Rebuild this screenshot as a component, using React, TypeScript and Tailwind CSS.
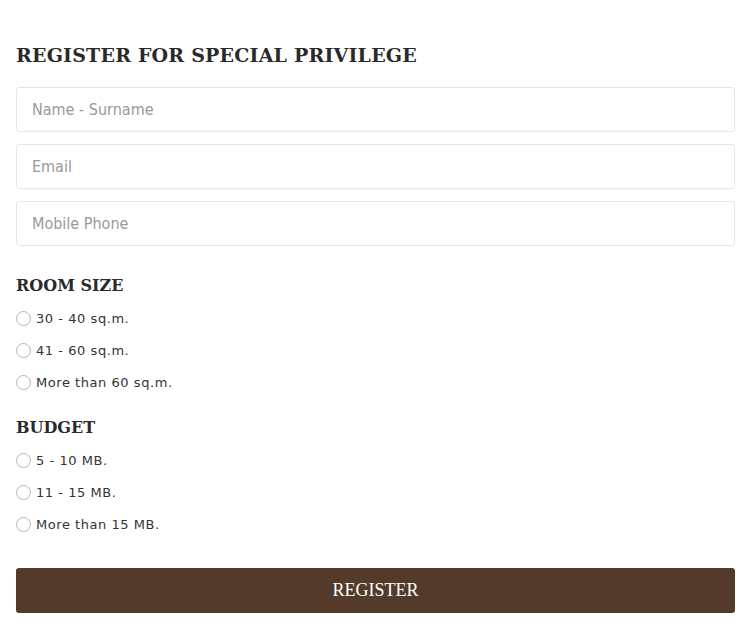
import React from "react";

const Radio = ({ name, label }: { name: string; label: string }) => {
  return (
    <label className="flex items-center h-8 gap-[5px] text-[13px] text-[#333] tracking-[0.55px] font-['DejaVu_Sans',sans-serif]">
      <span className="w-[15px] h-[15px] rounded-full border border-[#b5b5b5] bg-white shrink-0"></span>
      <input type="radio" name={name} className="hidden" />
      {label}
    </label>
  );
};

const Field = ({ placeholder }: { placeholder: string }) => {
  return (
    <input
      placeholder={placeholder}
      className="w-full h-[45px] rounded-[3px] border border-[#e6e6e6] px-[15px] text-[16px] placeholder:text-[#999] outline-none font-['Liberation_Sans_Narrow','DejaVu_Sans_Condensed',sans-serif]"
    />
  );
};

const App = () => {
  return (
    <main className="min-h-screen bg-white pl-4 pr-[10px] pt-[41px]">
      <h1 className="text-[19px] font-bold text-[#2a2a2a] tracking-[0.2px] font-['DejaVu_Serif',serif] mb-[17px]">
        REGISTER FOR SPECIAL PRIVILEGE
      </h1>
      <div className="flex flex-col gap-3">
        <Field placeholder="Name - Surname" />
        <Field placeholder="Email" />
        <Field placeholder="Mobile Phone" />
      </div>

      <h2 className="mt-[28px] mb-[5px] text-[16px] font-bold text-[#2a2a2a] font-['DejaVu_Serif',serif]">
        ROOM SIZE
      </h2>
      <div className="flex flex-col">
        <Radio name="size" label="30 - 40 sq.m." />
        <Radio name="size" label="41 - 60 sq.m." />
        <Radio name="size" label="More than 60 sq.m." />
      </div>

      <h2 className="mt-[17px] mb-[5px] text-[16px] font-bold text-[#2a2a2a] font-['DejaVu_Serif',serif]">
        BUDGET
      </h2>
      <div className="flex flex-col">
        <Radio name="budget" label="5 - 10 MB." />
        <Radio name="budget" label="11 - 15 MB." />
        <Radio name="budget" label="More than 15 MB." />
      </div>

      <button className="mt-[27px] w-full h-[45px] rounded-[3px] bg-[#533a2a] text-white text-[18px] font-['Liberation_Serif',serif]">
        REGISTER
      </button>
    </main>
  );
};

export default App;
